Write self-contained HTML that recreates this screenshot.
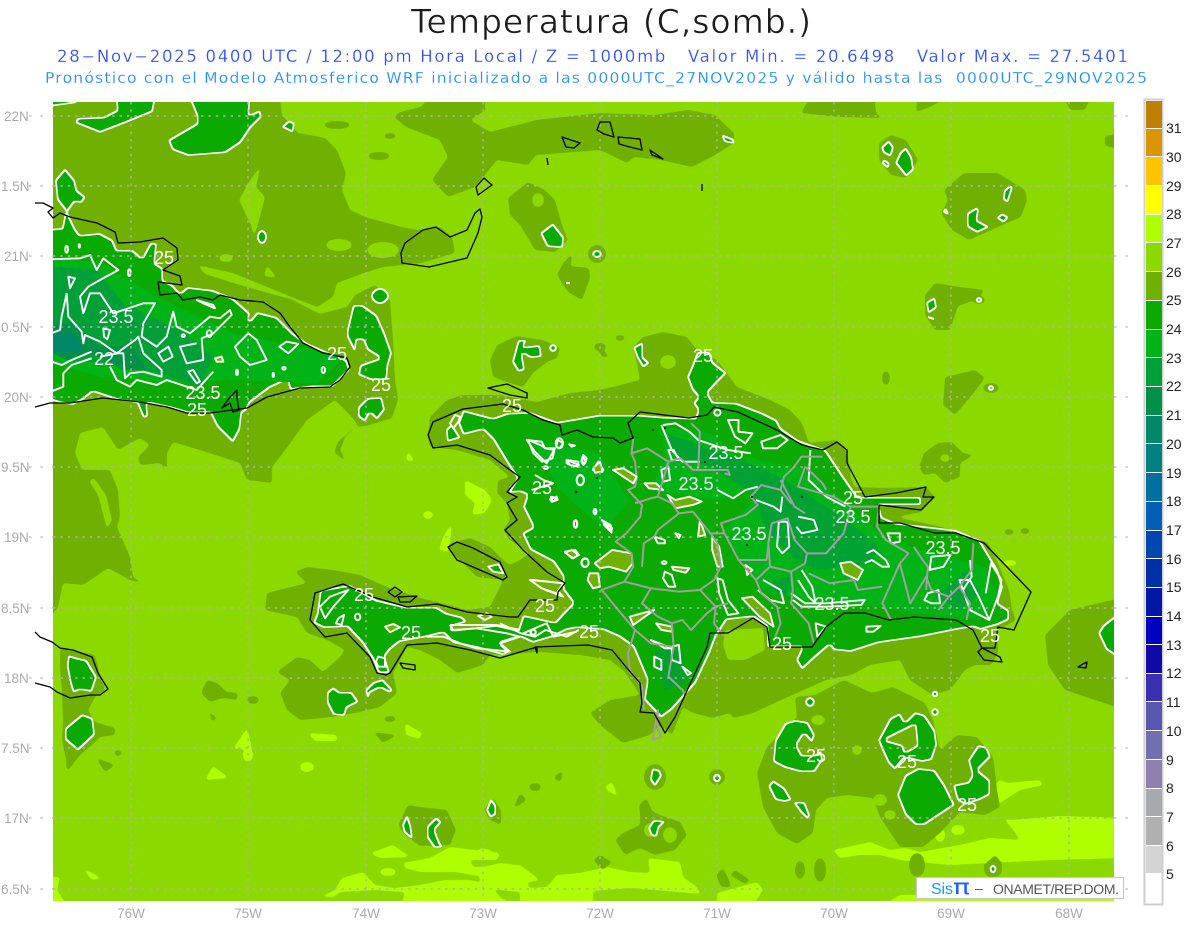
<!DOCTYPE html>
<html><head><meta charset="utf-8"><title>Temperatura</title>
<style>
html,body{margin:0;padding:0;background:#fff;width:1200px;height:927px;overflow:hidden}
svg{display:block}
text{font-family:"Liberation Sans",sans-serif;white-space:pre}
.c{fill:#6FB000}.l{fill:#B0FF00}.b{fill:#8CD900}
.g{fill:#000;fill-rule:evenodd}
.w{fill:none;stroke:#fff;stroke-width:1.9;stroke-linejoin:round;vector-effect:non-scaling-stroke}
.wo{fill:#6FB000;stroke:#fff;stroke-width:1.9;stroke-linejoin:round;vector-effect:non-scaling-stroke}
.k{fill:none;stroke:#000;stroke-width:1.3;stroke-linejoin:round}
.a{fill:none;stroke:#a0a0a0;stroke-width:2;stroke-linejoin:round;vector-effect:non-scaling-stroke}
.v text{fill:#fff;font-size:18px;text-anchor:middle}
.ax text{fill:#aaa;font-size:13.5px}
.cb text{fill:#222;font-size:14px}
</style></head><body>
<svg width="1200" height="927" viewBox="0 0 1200 927" xmlns="http://www.w3.org/2000/svg">
<defs>
<clipPath id="m"><rect x="53" y="102" width="1061" height="799"/></clipPath>
<filter id="s" filterUnits="userSpaceOnUse" x="0" y="70" width="1200" height="857" color-interpolation-filters="sRGB">
<feGaussianBlur in="SourceGraphic" stdDeviation="1.6"/>
<feComponentTransfer><feFuncA type="linear" slope="5" intercept="-2"/></feComponentTransfer>
</filter>
<filter id="gc" filterUnits="userSpaceOnUse" x="0" y="70" width="1200" height="857" color-interpolation-filters="sRGB">
<feGaussianBlur in="SourceAlpha" stdDeviation="1.2" result="b"/>
<feComponentTransfer in="b" result="t"><feFuncA type="linear" slope="6" intercept="-2.5"/></feComponentTransfer>
<feMorphology in="t" operator="erode" radius="1.6" result="e"/>
<feComposite in="t" in2="e" operator="out" result="ring"/>
<feFlood flood-color="#fff"/><feComposite in2="ring" operator="in" result="wr"/>
<feFlood flood-color="#0AAA00"/><feComposite in2="t" operator="in" result="gf"/>
<feMerge><feMergeNode in="gf"/><feMergeNode in="wr"/></feMerge>
</filter>
<filter id="soft" filterUnits="userSpaceOnUse" x="0" y="70" width="1200" height="857" color-interpolation-filters="sRGB">
<feGaussianBlur stdDeviation=".22"/>
</filter>
</defs>
<rect width="1200" height="927" fill="#fff"/>
<text x="411" y="33" font-size="33" fill="#1c1c1c" textLength="400" lengthAdjust="spacing" stroke="#fff" stroke-width=".5" style="font-family:'DejaVu Sans',sans-serif">Temperatura (C,somb.)</text>
<text x="57" y="62" font-size="16.5" fill="#2d4dff" textLength="1071" lengthAdjust="spacing" stroke="#fff" stroke-width=".2" style="font-family:'DejaVu Sans',sans-serif">28−Nov−2025 0400 UTC / 12:00 pm Hora Local / Z = 1000mb   Valor Min. = 20.6498   Valor Max. = 27.5401</text>
<text x="45" y="83" font-size="15.5" fill="#1e90ff" textLength="1102" lengthAdjust="spacing" stroke="#fff" stroke-width=".15" style="font-family:'DejaVu Sans',sans-serif">Pronóstico con el Modelo Atmosferico WRF inicializado a las 0000UTC_27NOV2025 y válido hasta las  0000UTC_29NOV2025</text>

<g clip-path="url(#m)">
<g filter="url(#soft)">
<rect x="40" y="90" width="1085" height="820" fill="#8CD900"/>
<!-- lime -->
<g class="l" filter="url(#s)">
<path d="M370 853 393 845 410 857 380 858Z"/>
<path d="M403 863 430 858 450 847 500 853 497 860 470 860 473 867 520 865 540 880 517 885 490 878 455 872 420 872 405 868Z"/>
<path d="M342 878 363 872 375 885 395 888 420 885 445 880 470 880 490 885 500 897 520 910 400 910 405 892 375 890 340 892 333 897 320 897 335 890Z"/>
<ellipse cx="388" cy="872" rx="8" ry="4"/>
<path d="M40 877 60 877 57 890 70 910 40 910Z"/>
<path d="M480 868 500 863 517 865 522 877 530 888 547 887 557 875 580 873 607 867 630 872 650 873 648 858 680 862 683 877 698 888 700 894 667 891 630 888 593 891 593 910 520 910 520 892 480 888Z"/>
<path d="M480 848 490 850 498 860 480 860Z"/>
<path d="M717 893 757 882 763 890 750 910 717 910Z"/>
<path d="M1125 818 1060 816 1010 820 1003 818 1015 832 1020 840 990 838 960 845 920 852 905 848 890 850 870 842 833 850 840 858 860 855 880 855 900 860 950 865 1010 862 1050 860 1125 858Z"/>
<path d="M875 910 900 895 1125 892 1125 910Z"/>
<path d="M990 790 1000 780 1007 783 1040 780 1043 785 1020 790 1000 803 993 800Z"/>
<ellipse cx="940" cy="835" rx="5" ry="7"/><ellipse cx="958" cy="830" rx="7" ry="5"/>
<path d="M247 728 233 749 252 749Z"/><ellipse cx="248" cy="755" rx="5" ry="7"/>
<path d="M308 733 337 735 337 741 315 741Z"/><ellipse cx="307" cy="767" rx="7" ry="5"/>
<path d="M213 766 229 778 205 780Z"/><path d="M82 868 102 878 92 880Z"/>
<path d="M405 723 422 733 420 739 406 735Z"/>
<path d="M465 480 485 490 492 500 485 513 472 515 475 503 465 495Z"/>
<ellipse cx="428" cy="515" rx="5" ry="4"/><path d="M443 537 452 523 449 552 439 550Z"/>
<path d="M408 451 415 462 406 460Z"/>
<path d="M604 788 618 797 612 782Z"/>
<ellipse cx="1010" cy="563" rx="7" ry="3"/>
</g>
<!-- olive -->
<g class="c" filter="url(#s)">
<path d="M40 90 279 90 282 115 298 133 325 138 337 150 346 173 342 190 350 210 365 217 402 227 417 230 440 227 452 237 455 253 421 263 383 267 364 273 337 283 333 297 317 307 267 287 233 273 197 265 205 274 240 285 290 299 320 314 347 307 355 295 375 285 390 300 393 340 395 380 398 400 392 418 370 425 352 428 338 442 334 452 347 463 340 450 345 438 358 425 350 415 335 400 307 420 283 453 272 467 272 483 247 480 240 463 200 450 173 442 167 453 167 470 160 463 140 465 138 457 150 445 140 438 118 450 103 427 80 433 75 453 82 470 110 470 118 490 120 517 117 527 130 557 133 577 147 585 130 580 108 568 83 585 63 583 58 607 40 630Z"/>
<path d="M394 117 406 127 440 140 448 157 432 180 448 197 475 187 497 160 528 165 536 155 600 150 627 163 634 157 661 160 692 167 715 155 734 143 734 133 715 115 688 110 655 115 600 113 536 120 490 132 470 120 486 110 482 90 436 90 421 107 400 112Z"/>
<path d="M801 113 814 90 874 90 876 113 882 118 840 117Z"/><path d="M918 90 962 90 930 107 916 112Z"/>
<path d="M1061 90 1094 90 1085 110 1070 110Z"/>
<path d="M1125 132 1105 136 1105 146 1125 150Z"/>
<path d="M879 143 891 135 906 140 918 160 906 178 891 175 879 160Z"/>
<path d="M944 190 964 173 998 173 1025 190 1027 200 1021 217 998 227 969 240 952 230 941 213 948 200Z"/>
<path d="M528 182 545 190 555 200 562 225 568 240 555 252 535 250 520 225 510 215 508 198Z"/>
<circle cx="597" cy="254" r="9"/>
<path d="M573 253 563 263 557 275 568 292 582 300 590 278 589 268 570 266Z"/>
<path d="M490 360 497 345 517 336 543 340 560 348 557 358 547 362 533 373 523 387 510 383 493 377Z"/>
<ellipse cx="600" cy="347" rx="6" ry="4"/><path d="M594 342 610 357 602 357Z"/><ellipse cx="620" cy="338" rx="5" ry="3"/>
<!-- Hispaniola surround -->
<path d="M430 417 447 400 463 395 500 395 537 402 570 393 600 390 640 380 637 363 633 347 643 337 663 332 687 337 697 350 717 360 737 387 770 400 790 410 802 423 809 443 837 440 847 450 851 477 854 487 886 488 926 487 935 497 921 512 896 517 942 527 988 543 998 563 1009 590 1012 610 1016 620 998 630 998 653 991 665 975 665 965 670 950 690 932 695 910 680 900 660 870 665 851 675 826 680 781 700 753 713 733 718 730 713 713 718 693 713 683 707 672 735 660 725 650 735 623 743 600 725 590 713 610 700 640 695 625 672 610 660 580 655 540 652 490 655 477 660 457 673 440 660 420 650 407 647 393 673 397 693 380 707 360 712 333 717 300 720 287 710 280 693 290 680 277 672 297 657 310 660 323 672 340 657 345 650 327 640 307 633 297 617 265 610 267 593 307 583 295 572 307 567 333 570 360 575 387 587 417 597 437 602 467 610 490 607 497 593 503 580 477 577 460 560 448 550 450 543 470 538 490 547 503 560 510 565 520 560 530 553 510 540 503 530 510 520 507 503 497 493 498 480 510 477 490 460 457 450 430 447 428 437Z"/>
<path d="M767 747 797 717 795 697 815 695 844 680 872 693 893 687 925 703 933 720 940 750 957 735 977 737 993 757 995 772 997 790 1000 807 985 815 960 812 940 833 923 847 900 847 880 817 873 798 847 795 827 798 816 810 813 833 797 844 777 833 763 807 757 773Z"/>
<path d="M1125 597 1070 610 1045 635 1048 665 1065 690 1125 710Z"/>
<path d="M60 648 95 655 100 675 105 690 95 697 88 710 95 722 115 728 115 735 100 737 92 745 80 755 67 772 66 760 62 740 63 720 62 690 60 670Z"/>
<path d="M207 680 217 683 227 692 238 693 237 700 223 698 210 702 201 693Z"/>
<ellipse cx="253" cy="700" rx="6" ry="4"/><path d="M207 710 217 718 213 722Z"/>
<path d="M96 758 115 765 105 772Z"/><ellipse cx="118" cy="753" rx="4" ry="3"/>
<path d="M373 732 397 735 383 743Z"/>
<ellipse cx="390" cy="719" rx="6" ry="3"/>
<path d="M457 673 477 655 490 655 483 665Z"/>
<path d="M408 805 420 807 447 810 456 830 450 845 420 846 405 835 398 825Z"/>
<path d="M493 798 501 810 501 825 490 820 484 810Z"/>
<ellipse cx="655" cy="777" rx="11" ry="13"/><ellipse cx="717" cy="777" rx="8" ry="8"/>
<path d="M640 805 660 815 680 822 687 835 675 850 655 855 640 848 625 855 615 840 623 833 640 825Z"/>
<path d="M646 798 652 810 640 814 639 805Z"/>
<path d="M593 860 600 855 612 862 603 870Z"/>
<path d="M553 778 563 770 561 782Z"/><ellipse cx="535" cy="787" rx="6" ry="4"/>
<path d="M520 793 527 800 513 809Z"/><path d="M723 868 729 880 731 887 721 887 716 875Z"/>
<path d="M735 870 750 880 745 884 730 875Z"/>
<ellipse cx="800" cy="870" rx="5" ry="9"/><ellipse cx="820" cy="870" rx="6" ry="12"/>
<ellipse cx="917" cy="865" rx="8" ry="12"/><path d="M995 855 983 866 990 874 1003 864Z"/>
<circle cx="993" cy="869" r="9"/>
<path d="M935 283 960 287 985 290 975 300 958 306 950 330 935 330 925 315 925 295Z"/>
<path d="M945 377 975 370 985 378 972 395 955 415 943 405Z"/>
<ellipse cx="886" cy="378" rx="4" ry="7"/><ellipse cx="991" cy="388" rx="8" ry="5"/>
<ellipse cx="979" cy="300" rx="6" ry="4"/>
<path d="M919 467 924 453 938 443 952 442 963 453 974 455 960 463 960 477 945 483 935 473 924 475Z"/>
<ellipse cx="1009" cy="532" rx="5" ry="3"/><ellipse cx="1025" cy="531" rx="5" ry="3"/>
</g>
<!-- base holes in olive -->
<g class="b" filter="url(#s)">
<path d="M261 165 249 182 239 200 251 225 254 237 261 213 265 197 256 187Z"/>
<ellipse cx="339" cy="245" rx="13" ry="6"/><ellipse cx="383" cy="250" rx="16" ry="8"/>
<ellipse cx="226" cy="258" rx="7" ry="4"/><path d="M267 265 277 278 264 276Z"/>
<ellipse cx="337" cy="125" rx="13" ry="4" fill="#6FB000"/>
<ellipse cx="379" cy="156" rx="11" ry="4" fill="#6FB000"/>
<ellipse cx="390" cy="136" rx="6" ry="3" fill="#6FB000"/>
<path d="M89 481 98 495 107 529 112 520 106 495 94 478Z"/>
<ellipse cx="538" cy="200" rx="6" ry="7"/>
<ellipse cx="668" cy="362" rx="8" ry="7"/>
<path d="M725 630 763 628 765 650 745 660 728 660 723 645Z"/>
<ellipse cx="818" cy="720" rx="7" ry="5"/><ellipse cx="880" cy="800" rx="7" ry="6"/><ellipse cx="890" cy="815" rx="6" ry="5"/>
<ellipse cx="857" cy="750" rx="5" ry="5"/>
<ellipse cx="338" cy="703" rx="7" ry="8"/>
<ellipse cx="945" cy="458" rx="5" ry="4"/>
<ellipse cx="650" cy="830" rx="6" ry="7"/><ellipse cx="670" cy="835" rx="7" ry="8"/>
</g>

<!-- green contours -->
<g class="g" filter="url(#gc)">
<path d="M40 108 77 103 77 90 40 90Z"/>
<path d="M115 90 117 110 103 117 77 118 75 123 100 133 126 123 153 112 157 90Z"/>
<path d="M186 90 197 117 197 123 168 140 172 150 188 156 226 153 241 143 251 128 262 117 260 110 249 115 251 90Z"/>
<path d="M281 127 289 120 295 123 293 133Z"/>
<ellipse cx="262" cy="237" rx="5" ry="7"/>
<path d="M553 223 564 237 563 248 547 247 540 233Z"/>
<ellipse cx="597" cy="254" rx="5" ry="4"/>
<path d="M721 134 734 139 735 144 724 142Z"/>
<path d="M881 147 889 140 894 147 891 157 883 153Z"/><path d="M884 159 890 163 888 169 881 163Z"/>
<path d="M906 147 912 157 914 170 906 177 895 163 900 152Z"/>
<path d="M977 207 967 213 967 227 977 233 990 227 977 220 979 210Z"/>
<path d="M1010 185 1013 187 1008 203 1003 200 1004 190Z"/><path d="M1002 213 1009 217 1004 223 996 218Z"/>
<path d="M946 207 950 216 942 212Z"/>
<ellipse cx="380" cy="296" rx="9" ry="8"/>
<path d="M347 330 353 305 363 305 377 315 385 333 392 353 388 367 387 380 370 380 358 375 360 365 380 358 367 350 363 340 357 340 355 353 347 337Z"/>
<path d="M358 407 367 398 382 397 385 410 377 420 370 413 365 422 358 417Z"/>
<path d="M65 168 75 180 77 190 86 197 82 203 75 202 67 213 57 200 55 180Z"/>
<!-- Cuba -->
<path d="M40 230 62 228 65 213 68 213 75 228 80 235 100 233 113 240 117 250 133 250 142 258 150 243 157 243 155 263 163 268 163 280 173 285 180 293 187 287 213 290 233 298 250 313 248 323 257 312 277 317 293 333 307 343 330 353 347 360 350 370 333 387 313 387 290 390 287 380 270 388 250 403 247 410 242 413 240 430 233 443 217 427 210 413 187 413 170 408 147 403 148 417 143 418 137 403 117 400 93 392 83 400 73 405 60 403 40 397Z"/>
<!-- Hispaniola -->
<path d="M463 410 493 418 507 413 530 412 557 422 598 415 640 415 665 417 695 418 698 410 693 403 698 397 692 390 687 377 693 363 697 352 710 352 713 362 727 373 717 383 708 393 713 402 737 403 763 413 777 420 781 428 798 440 826 450 844 477 858 497 921 497 921 505 879 505 882 517 896 523 931 527 956 530 980 540 998 570 1003 587 998 603 1009 610 1009 620 998 625 980 630 973 627 956 630 921 637 879 643 851 652 833 650 830 645 816 657 802 670 796 660 802 647 767 647 767 627 753 617 727 620 716 637 710 653 696 683 672 710 661 718 644 700 647 680 633 647 619 637 603 630 577 628 567 630 553 637 533 643 520 637 500 643 510 652 503 655 477 648 453 643 443 633 427 637 410 640 400 642 390 650 385 657 390 673 378 673 373 660 362 643 347 627 323 628 313 623 317 613 320 590 350 585 377 600 407 607 437 607 447 613 463 617 467 622 450 627 453 630 497 625 518 630 523 615 537 618 555 622 563 613 573 603 563 590 563 577 553 562 530 550 522 533 533 527 523 507 527 495 520 492 508 493 517 478 507 463 493 440 483 430 463 435 458 423Z"/>
<path d="M446 429 452 424 461 438 447 442Z"/>
<path d="M518 340 527 340 523 347 540 345 542 357 530 358 522 353 525 370 518 372 512 362Z"/>
<circle cx="553" cy="348" r="4"/>
<path d="M633 347 643 342 643 357 650 363 643 368 637 358Z"/>
<!-- south blobs -->
<path d="M333 687 340 692 352 692 359 702 347 708 345 716 333 715 327 703 327 692Z"/>
<path d="M383 679 393 690 390 693 380 688 370 693 368 700 365 690 373 682Z"/>
<path d="M68 655 78 658 87 660 97 677 92 692 80 690 73 693 70 683 67 667Z"/>
<path d="M82 714 93 718 95 735 78 751 65 740 65 728Z"/>
<path d="M407 814 411 825 413 840 404 833 402 825Z"/>
<path d="M436 817 442 822 435 830 440 843 444 847 434 848 427 838 427 826Z"/>
<path d="M491 798 496 805 496 815 490 818 486 810Z"/>
<path d="M652 768 660 770 662 776 655 787 650 780Z"/>
<ellipse cx="717" cy="778" rx="4" ry="4.5"/>
<path d="M653 820 666 821 659 828 657 837 651 836 648 828Z"/>
<path d="M775 740 785 723 795 720 808 722 815 735 812 743 804 734 797 745 802 755 815 755 821 750 823 760 815 772 800 772 785 768 773 762Z"/>
<path d="M768 786 773 780 785 788 792 800 785 802 775 800Z"/>
<path d="M793 802 805 802 810 815 808 820 800 812Z"/>
<path d="M878 740 890 718 900 713 905 722 915 712 925 715 935 730 937 745 932 760 922 762 905 758 895 770 888 763 882 750Z M885 740 915 725 917 745 905 752 903 745Z"/>
<path d="M897 795 905 775 918 768 935 770 945 785 955 805 940 815 925 825 915 825 905 815Z"/>
<path d="M953 785 968 782 972 775 968 760 978 745 987 747 991 757 978 770 990 780 990 795 980 800 965 805 957 800Z"/>
<path d="M1125 608 1103 625 1098 633 1106 650 1125 662Z"/>
<circle cx="935" cy="712" r="4"/><circle cx="935" cy="694" r="3.5"/>
<ellipse cx="810" cy="702" rx="5" ry="5"/>
<ellipse cx="993" cy="869" rx="3.5" ry="4.5"/>
<ellipse cx="991" cy="388" rx="3.5" ry="3"/>
<ellipse cx="979" cy="300" rx="3.5" ry="3"/>
<path d="M926 302 935 297 937 308 928 314Z"/>
</g>
<path d="M928 317 934 319" stroke="#fff" stroke-width="2"/>
<path d="M566 283h4" stroke="#fff" stroke-width="2"/>

<!-- Cuba interior -->
<g transform="translate(0 190) scale(.3333)">
<path fill="#00B418" d="M160 200 300 220 470 320 700 430 1040 500 950 580 700 570 500 580 300 560 160 520Z"/>
<path fill="#00A038" d="M160 230 290 240 370 340 560 430 640 500 600 590 480 550 330 520 200 510 160 480Z"/>
<path fill="#009048" d="M160 400 215 400 300 470 400 470 440 540 370 540 290 490 200 510 160 490Z"/>
<path fill="#008868" d="M160 430 220 430 250 480 190 495 160 480Z"/>
<path class="w" d="M140 208 240 205 270 195 290 240 310 205 355 240 300 270 265 290 240 320 250 370 270 310 300 310 340 370 400 350 430 340 465 340 430 400 425 440 470 470 500 440 520 365 530 410 570 430 630 380 660 385 690 360 695 375 640 430 605 445 610 510 560 520 540 470 590 460"/>
<path class="w" d="M205 260 225 265 210 295Z"/>
<path class="w" d="M310 415 330 420 322 448 312 440Z"/>
<path class="w" d="M475 490 505 470 518 500 490 515Z"/>
<path class="w" d="M200 310 185 380 180 420 140 435"/>
<path class="w" d="M200 310 205 380 245 425 250 460 255 435 300 455 350 490 405 450 415 440 430 490 485 540 485 560 430 545 390 550 375 565 370 490 355 490 300 500"/>
<path class="w" d="M140 510 185 525 215 510 275 485"/>
<path class="w" d="M275 505 215 525 190 550 190 590 140 610"/>
<path class="w" d="M330 530 350 570 390 590 410 570 470 585 500 570 560 590 590 600 640 545"/>
<path class="w" d="M565 545 580 540 600 575 590 580Z"/>
<path class="wo" d="M645 505 665 500 670 515 650 515Z"/>
<path class="w" d="M705 470 745 430 770 450 800 510 750 525 720 500Z"/>
<path class="w" d="M838 470 860 455 895 462 865 490Z"/>
<path class="wo" d="M590 330 640 345 645 355 610 340Z"/>
<ellipse class="w" cx="388" cy="248" rx="4" ry="10"/><ellipse class="w" cx="200" cy="178" rx="4" ry="10"/><ellipse class="w" cx="238" cy="168" rx="2" ry="5"/>
<ellipse class="w" cx="550" cy="437" rx="5" ry="4"/><ellipse class="w" cx="628" cy="431" rx="8" ry="10"/><ellipse class="w" cx="711" cy="547" rx="3" ry="8"/>
<ellipse class="w" cx="852" cy="535" rx="5" ry="4"/><ellipse class="w" cx="970" cy="540" rx="5" ry="9"/><ellipse class="w" cx="820" cy="555" rx="2" ry="6"/>
</g>

<!-- Hispaniola interior -->
<g transform="translate(500 390) scale(.3507 .3333)">
<path fill="#00B418" d="M700 200 880 240 1100 450 1380 530 1420 620 1370 690 1180 670 1000 640 850 630 750 600 680 500 640 420 720 330Z"/>
<path fill="#00B418" d="M460 110 600 130 720 240 740 290 620 330 430 300 470 200Z"/>
<path fill="#00B418" d="M90 150 280 190 370 330 300 420 170 300Z"/>
<g fill="#00A038" opacity=".8">
<path d="M470 130 560 160 760 240 860 300 1000 400 1080 470 1060 520 900 540 830 500 760 420 720 310 600 230 500 200Z"/>
<path d="M1240 620 1330 540 1370 610 1310 660Z"/>
<path d="M780 570 830 560 820 620 770 600Z"/>
<path d="M440 780 520 780 530 880 470 900Z"/>
</g>
<path class="wo" d="M322 240 350 235 385 260 380 280 350 255Z"/>
<path class="wo" d="M412 280 445 280 465 300 425 295Z"/>
<path class="wo" d="M478 315 500 330 540 320 575 335 550 345 500 355Z"/>
<path class="wo" d="M185 485 215 480 225 495 205 505Z"/>
<path class="wo" d="M270 520 320 480 375 490 378 520 360 545 310 530 285 535Z"/>
<path class="wo" d="M255 550 280 550 285 590 265 595 250 570Z"/>
<path class="wo" d="M570 390 585 435 565 440Z"/>
<path class="wo" d="M605 440 625 470 635 530 620 530 605 480Z"/>
<path class="wo" d="M690 625 720 620 770 670 780 710 740 680Z"/>
<path class="wo" d="M970 520 1000 515 1035 540 1020 570 980 550Z"/>
<path class="wo" d="M700 525 720 540 705 555Z"/>
<path class="wo" d="M445 700 490 710 490 725 460 720Z"/>
<path class="wo" d="M490 530 540 535 530 548 495 540Z"/>
<path class="wo" d="M370 680 440 660 380 705Z"/>
<path class="w" d="M465 105 500 100 540 125 565 150 650 180 715 190"/>
<path class="w" d="M460 105 490 180 520 215 570 215"/>
<path class="w" d="M650 90 680 90 680 125 720 130 700 160 670 140Z"/>
<path class="w" d="M745 155 800 135 820 150 790 175 750 175Z"/>
<path class="w" d="M80 150 115 165 130 175 155 180 150 205 120 215 95 190Z"/>
<path class="w" d="M165 150 180 160 170 175 160 170Z"/>
<path class="w" d="M190 210 225 225 210 230 190 220Z"/>
<path class="w" d="M235 200 245 215 238 225 232 215Z"/>
<path class="w" d="M265 240 280 215 295 240Z"/>
<ellipse class="w" cx="229" cy="271" rx="10" ry="15"/>
<path class="w" d="M460 240 480 230 485 270 465 275Z"/>
<path class="w" d="M480 180 495 180 510 210 490 210Z"/>
<path class="w" d="M145 320 163 325 150 335Z"/>
<ellipse class="w" cx="215" cy="402" rx="5" ry="11"/><ellipse class="w" cx="271" cy="365" rx="4" ry="8"/>
<path class="w" d="M295 395 320 415 315 425 297 405Z"/>
<ellipse class="w" cx="243" cy="518" rx="10" ry="12"/>
<path class="w" d="M440 440 470 450 470 460 450 460Z"/>
<path class="w" d="M500 430 515 435 510 445Z"/>
<path class="w" d="M470 545 490 555 500 590 480 590 465 565Z"/>
<ellipse class="w" cx="468" cy="518" rx="7" ry="4"/>
<path class="w" d="M620 565 635 570 650 630 680 670 650 675 625 610Z"/>
<path class="w" d="M795 395 820 395 825 470 805 490 790 470Z"/>
<path class="w" d="M850 380 895 390 905 420 860 430 845 410"/>
<path class="w" d="M1045 490 1065 480 1100 510 1110 530 1090 530 1060 510 1040 520"/>
<path class="w" d="M1105 430 1140 430 1140 455 1115 460Z"/>
<path class="w" d="M1230 500 1285 495 1265 530 1225 540Z"/>
<path class="w" d="M1220 610 1250 600 1255 640 1230 640 1210 630Z"/>
<path class="w" d="M1310 570 1340 570 1365 620 1395 690 1340 660Z"/>
<path class="w" d="M1385 610 1400 520 1430 570 1420 620 1395 690"/>
<path class="w" d="M750 570 800 600 810 640 770 630 735 600"/>
<path class="w" d="M860 540 890 590 900 640 880 620 850 570"/>
<path class="w" d="M830 610 870 640 930 640 1040 630 1030 645 930 650 860 650 835 630"/>
<path class="w" d="M900 700 930 710 905 740Z"/>
<path class="w" d="M440 800 460 810 460 840 440 830Z"/>
<path class="w" d="M490 770 510 765 515 820 490 810Z"/>
<path class="w" d="M520 830 545 850 535 855Z"/>
<path class="w" d="M430 750 490 775 470 775Z"/>
<path class="w" d="M1045 710 1085 708 1065 725 1045 725Z"/>
<circle class="w" cx="620" cy="68" r="9"/>
<path class="w" d="M620 300 665 325 700 300 735 290"/>
<path class="w" d="M730 330 780 350 800 365 805 320"/>
<path class="w" d="M885 180 880 270 930 320 985 350"/>
<path class="w" d="M1340 510 1345 560 1320 600"/>
<path class="w" d="M0 700 60 730 100 740 130 720 190 740 225 720"/>
<path class="w" d="M90 570 140 575 180 620 130 600Z"/>
<circle class="w" cx="95" cy="727" r="7"/>
<!-- admin -->
<path class="a" d="M380 145 375 190 385 215 390 265 385 290 365 300 405 345 400 380 360 430 330 455 375 490 380 530 355 575 290 600 345 670 385 720 365 790 370 840 405 890 410 960"/>
<path class="a" d="M545 100 570 125 565 240"/>
<path class="a" d="M375 190 420 175 450 195 480 215 515 205 550 240 650 240 655 255 640 250"/>
<path class="a" d="M480 215 465 270 450 320 490 340 510 370 450 420 440 440 410 460 405 530"/>
<path class="a" d="M385 340 430 325 450 320"/>
<path class="a" d="M510 370 550 365 600 430 640 430 630 400 700 375 735 345 715 320 745 285 800 300 810 260 835 235 860 200 920 200"/>
<path class="a" d="M600 430 620 460 630 530 610 570 570 600 510 605 430 595 355 575"/>
<path class="a" d="M430 595 405 640 450 680 490 700 520 690 545 720 590 670 615 650 650 640"/>
<path class="a" d="M615 650 610 700 640 740"/>
<path class="a" d="M570 600 615 650"/>
<path class="a" d="M490 700 495 770 480 860 520 900 530 920"/>
<path class="a" d="M385 720 430 760 490 770"/>
<path class="a" d="M640 430 670 490 680 510 730 570 770 530 765 460 775 400 820 385 840 450 875 490 870 520 830 545 770 530"/>
<path class="a" d="M680 510 760 510 765 470"/>
<path class="a" d="M730 570 745 610 790 650 800 700 785 740"/>
<path class="a" d="M830 545 835 600 830 640 880 700 895 760"/>
<path class="a" d="M875 490 930 490 980 430 1000 350 950 320 850 290 870 230"/>
<path class="a" d="M870 230 920 280 930 300"/>
<path class="a" d="M1000 350 1080 350 1075 410 1100 450 1165 490 1140 520 1090 640 1115 690"/>
<path class="a" d="M880 550 940 580 1010 570 1020 600 1090 590"/>
<path class="a" d="M1140 520 1170 640 1215 560 1230 600 1280 620 1250 660"/>
<path class="a" d="M1180 470 1205 510 1220 530 1215 600"/>
<path class="a" d="M1280 620 1310 590 1345 540 1350 460"/>
<path class="a" d="M1310 590 1340 640 1330 690"/>
<path class="a" d="M815 320 830 340 800 300"/>
<path class="a" d="M800 270 840 350 870 370"/>
<path class="a" d="M450 960 435 1050 460 1040 450 1020Z"/>
</g>

<!-- white in Haiti -->
<g transform="translate(290 380) scale(.3333)">
<path class="w" d="M120 650 175 630 130 680 105 715 90 680Z"/>
<path class="w" d="M145 715 162 705 155 735 138 730Z"/>
<ellipse class="w" cx="203" cy="711" rx="8" ry="10"/>
<path class="wo" d="M285 740 310 732 330 742 300 757Z"/>
<ellipse class="w" cx="729" cy="757" rx="8" ry="9"/>
<path class="w" d="M480 735 620 735 690 750"/>
<path class="w" d="M480 735 490 750 560 745 650 760 690 770 630 790 660 815 560 805 510 790 460 770 410 770"/>
<path class="wo" d="M565 708 590 700 605 710 585 720Z"/>
<path class="w" d="M700 760 770 730 790 770 860 755"/>
<path class="wo" d="M720 600 820 610 800 640 755 625Z"/>
<path class="w" d="M265 830 285 835 285 860 265 860 258 845Z"/>
<path class="w" d="M710 180 755 185 765 205 795 205 770 250 735 215Z"/>
<ellipse class="w" cx="808" cy="190" rx="11" ry="15"/>
<path class="w" d="M838 193 855 197 845 200Z"/>
<path class="w" d="M830 240 865 245 865 260 840 255Z"/>
<path class="w" d="M880 225 890 235 885 250 876 245Z"/>
<path class="wo" d="M910 265 930 245 938 275 915 278Z"/>
<ellipse class="w" cx="871" cy="300" rx="11" ry="15"/>
<path class="wo" d="M970 270 1000 265 1040 290 1030 310 1000 290Z"/>
<ellipse class="w" cx="767" cy="263" rx="7" ry="4"/>
<path class="w" d="M780 358 800 350 803 360 785 365Z"/>
<ellipse class="w" cx="857" cy="432" rx="5" ry="11"/><ellipse class="w" cx="915" cy="395" rx="4" ry="8"/>
<path class="w" d="M935 420 962 435 965 458 945 430Z"/>
<path class="wo" d="M825 518 845 510 865 525 850 535Z"/>
<ellipse class="w" cx="885" cy="548" rx="11" ry="13"/>
<path class="wo" d="M495 105 510 110 505 125 490 145 480 130Z"/>
<path class="w" d="M735 285 760 300 790 310 725 330"/>
<path class="wo" d="M595 560 625 553 640 580 610 575Z" style="fill:#0AAA00"/>
</g>
<g fill="#111"><circle cx="576" cy="492" r="1.2"/><circle cx="597" cy="478" r="1"/><circle cx="653" cy="430" r="1"/><circle cx="665" cy="428" r="1"/><circle cx="802" cy="497" r="1"/><circle cx="747" cy="545" r="1"/><circle cx="705" cy="462" r="1"/><circle cx="752" cy="497" r="1"/></g>

<!-- grid -->
<g stroke="#b0b0b0" stroke-width="1.5" stroke-dasharray="2.4 5">
<path d="M53 116H1114M53 186H1114M53 256H1114M53 327H1114M53 397H1114M53 467H1114M53 537H1114M53 608H1114M53 678H1114M53 748H1114M53 818H1114M53 889H1114"/>
<path d="M131 102V901M248 102V901M366 102V901M483 102V901M600 102V901M717 102V901M834 102V901M951 102V901M1069 102V901"/>
</g>
</g>
</g>

<!-- outer grid ticks -->
<g stroke="#b4b4b4" stroke-width="1.3" stroke-dasharray="2.4 9">
<path d="M29 116H53M29 186H53M29 256H53M29 327H53M29 397H53M29 467H53M29 537H53M29 608H53M29 678H53M29 748H53M29 818H53M29 889H53"/>
<path d="M1114 116H1136M1114 186H1136M1114 256H1136M1114 327H1136M1114 397H1136M1114 467H1136M1114 537H1136M1114 608H1136M1114 678H1136M1114 748H1136M1114 818H1136M1114 889H1136"/>
</g>

<!-- coast -->
<path class="k" d="M35 203 43 203 53 208 48 212 53 218 60 213 70 217 97 223 115 232 118 243 140 242 163 238 177 248 178 260 163 270 180 276 182 285 158 282 160 295 177 293 183 300 200 297 213 300 220 295 240 300 263 302 280 313 290 327 303 343 323 353 347 358 350 367 340 380 330 387 300 388 267 397 247 408 210 413 187 413 167 407 140 402 103 398 70 403 50 403 35 407"/>
<path class="k" d="M237 390 230 397 222 408 230 403 233 412 239 410 237 398Z"/>
<path class="k" d="M480 209 482 217 478 233 467 258 429 267 402 263 401 253 405 243 423 230 436 227 450 237 467 230 475 213Z"/>
<path class="k" d="M484 178 492 185 478 195 476 187Z"/>
<path class="k" d="M562 137 580 143 574 148 566 147Z"/>
<path class="k" d="M547 158 548 165"/><path class="k" d="M702 184 702 191"/>
<path class="k" d="M600 122 610 122 614 137 604 134 597 130Z"/>
<path class="k" d="M618 137 640 139 642 150 630 147 619 144Z"/>
<path class="k" d="M650 150 663 159 652 155Z"/>
<path class="k" d="M35 632 40 637 52 642 60 648 73 650 92 657 98 673 108 689 100 695 90 695 70 698 57 692 50 687 35 683"/>
<path class="k" d="M488 388 507 384 527 393 527 398 510 395Z"/>
<path class="k" d="M1083 664 1087 662 1086 668 1078 667Z"/>
<path class="k" d="M448 547 457 542 473 548 500 562 507 577 503 580 480 570 457 560Z"/>
<path class="k" d="M388 592 395 587 402 592 395 597Z"/><path class="k" d="M398 597 417 596 410 602 400 602Z"/>
<path class="k" d="M400 663 415 665 415 670 403 668Z"/>
<path class="k" d="M433 422 463 409 503 404 523 410 543 420 560 425 562 435 577 430 593 437 613 438 620 443 633 438 628 423 640 412 689 418 707 415 714 407 738 412 777 430 802 445 823 450 837 442 847 450 847 463 865 497 896 493 926 487 923 497 934 497 921 510 879 505 879 523 900 523 935 533 956 533 984 543 1031 592 1014 630 998 627 995 648 982 648 978 652 984 660 1002 662 1000 657 982 648 973 630 956 620 914 617 889 620 865 613 844 613 826 627 812 647 770 647 767 627 753 618 728 633 710 633 707 647 675 717 665 733 654 713 640 712 642 703 640 683 626 667 612 650 588 645 535 647 537 653 537 647 510 655 500 658 470 650 437 643 407 645 390 673 386 675 377 673 370 657 347 633 325 637 310 620 315 593 343 584 373 597 407 607 437 604 467 612 510 617 518 617 530 600 557 600 558 592 565 583 547 572 523 550 505 530 517 520 507 503 517 497 507 492 520 477 510 470 490 455 457 445 433 448 428 435Z"/>

<!-- contour labels -->
<g class="v">
<text x="164" y="264">25</text><text x="116" y="323">23.5</text><text x="104" y="365">22</text><text x="337" y="360">25</text><text x="381" y="391">25</text><text x="203" y="399">23.5</text><text x="197" y="416">25</text>
<text x="512" y="412">25</text><text x="703" y="362">25</text><text x="726" y="459">23.5</text><text x="696" y="490">23.5</text><text x="542" y="494">25</text><text x="853" y="504">25</text><text x="853" y="523">23.5</text><text x="749" y="540">23.5</text><text x="943" y="554">23.5</text>
<text x="364" y="601">25</text><text x="545" y="612">25</text><text x="411" y="639">25</text><text x="589" y="638">25</text><text x="832" y="610">23.5</text><text x="782" y="650">25</text><text x="990" y="642">25</text><text x="816" y="762">25</text><text x="907" y="768">25</text><text x="967" y="811">25</text>
</g>

<!-- axes -->
<g class="ax">
<text x="4" y="121">22N</text><text x="1" y="191">1.5N</text><text x="4" y="261">21N</text><text x="1" y="332">0.5N</text><text x="4" y="402">20N</text><text x="1" y="472">9.5N</text><text x="4" y="542">19N</text><text x="1" y="613">8.5N</text><text x="4" y="683">18N</text><text x="1" y="753">7.5N</text><text x="4" y="823">17N</text><text x="1" y="894">6.5N</text>
<g text-anchor="middle"><text x="131" y="918">76W</text><text x="248" y="918">75W</text><text x="366" y="918">74W</text><text x="483" y="918">73W</text><text x="600" y="918">72W</text><text x="717" y="918">71W</text><text x="834" y="918">70W</text><text x="951" y="918">69W</text><text x="1069" y="918">68W</text></g>
</g>

<!-- colorbar -->
<g class="cb">
<rect x="1144.5" y="99.5" width="18" height="805" fill="#fff" stroke="#cfcfcf" stroke-width="2"/>
<rect x="1146" y="101" width="16" height="27" fill="#BF8000"/>
<rect x="1146" y="129" width="16" height="27" fill="#DB9500"/>
<rect x="1146" y="157" width="16" height="28" fill="#FFC400"/>
<rect x="1146" y="186" width="16" height="28" fill="#FFFF00"/>
<rect x="1146" y="215" width="16" height="27" fill="#B0FF00"/>
<rect x="1146" y="243" width="16" height="28" fill="#8CD900"/>
<rect x="1146" y="272" width="16" height="28" fill="#6FB000"/>
<rect x="1146" y="301" width="16" height="28" fill="#0AAA00"/>
<rect x="1146" y="330" width="16" height="27" fill="#00B418"/>
<rect x="1146" y="358" width="16" height="28" fill="#00A038"/>
<rect x="1146" y="387" width="16" height="28" fill="#009048"/>
<rect x="1146" y="416" width="16" height="27" fill="#008868"/>
<rect x="1146" y="444" width="16" height="28" fill="#008080"/>
<rect x="1146" y="473" width="16" height="28" fill="#0070A0"/>
<rect x="1146" y="502" width="16" height="28" fill="#0060B8"/>
<rect x="1146" y="531" width="16" height="27" fill="#0048B0"/>
<rect x="1146" y="559" width="16" height="28" fill="#0030A8"/>
<rect x="1146" y="588" width="16" height="28" fill="#0018A8"/>
<rect x="1146" y="617" width="16" height="27" fill="#0000C0"/>
<rect x="1146" y="645" width="16" height="28" fill="#1008A8"/>
<rect x="1146" y="674" width="16" height="27" fill="#3830B0"/>
<rect x="1146" y="702" width="16" height="28" fill="#5858B0"/>
<rect x="1146" y="731" width="16" height="28" fill="#7070B0"/>
<rect x="1146" y="760" width="16" height="28" fill="#9080B0"/>
<rect x="1146" y="789" width="16" height="27" fill="#A8A8B0"/>
<rect x="1146" y="817" width="16" height="28" fill="#B0B0B0"/>
<rect x="1146" y="846" width="16" height="27" fill="#D4D4D4"/>
<text x="1166" y="133">31</text><text x="1166" y="162">30</text><text x="1166" y="191">29</text><text x="1166" y="219">28</text><text x="1166" y="248">27</text><text x="1166" y="277">26</text><text x="1166" y="305">25</text><text x="1166" y="334">24</text><text x="1166" y="363">23</text><text x="1166" y="391">22</text><text x="1166" y="420">21</text><text x="1166" y="449">20</text><text x="1166" y="478">19</text><text x="1166" y="506">18</text><text x="1166" y="535">17</text><text x="1166" y="564">16</text><text x="1166" y="592">15</text><text x="1166" y="621">14</text><text x="1166" y="650">13</text><text x="1166" y="678">12</text><text x="1166" y="707">11</text><text x="1166" y="736">10</text><text x="1166" y="765">9</text><text x="1166" y="793">8</text><text x="1166" y="822">7</text><text x="1166" y="851">6</text><text x="1166" y="879">5</text>
</g>

<!-- legend -->
<rect x="916.5" y="877.5" width="207" height="21" fill="#fff" stroke="#c8c8c8" stroke-width="1.2"/>
<text x="931" y="894" font-size="16" fill="#0a9cff" textLength="22">Sis</text>
<text x="953" y="894" font-size="21" fill="#2060ff" style="font-family:'DejaVu Sans',sans-serif" textLength="17" lengthAdjust="spacingAndGlyphs">π</text>
<text x="975" y="893" font-size="14" fill="#555">–</text>
<text x="993" y="894" font-size="14" fill="#555" textLength="126">ONAMET/REP.DOM.</text>
</svg>
</body></html>
